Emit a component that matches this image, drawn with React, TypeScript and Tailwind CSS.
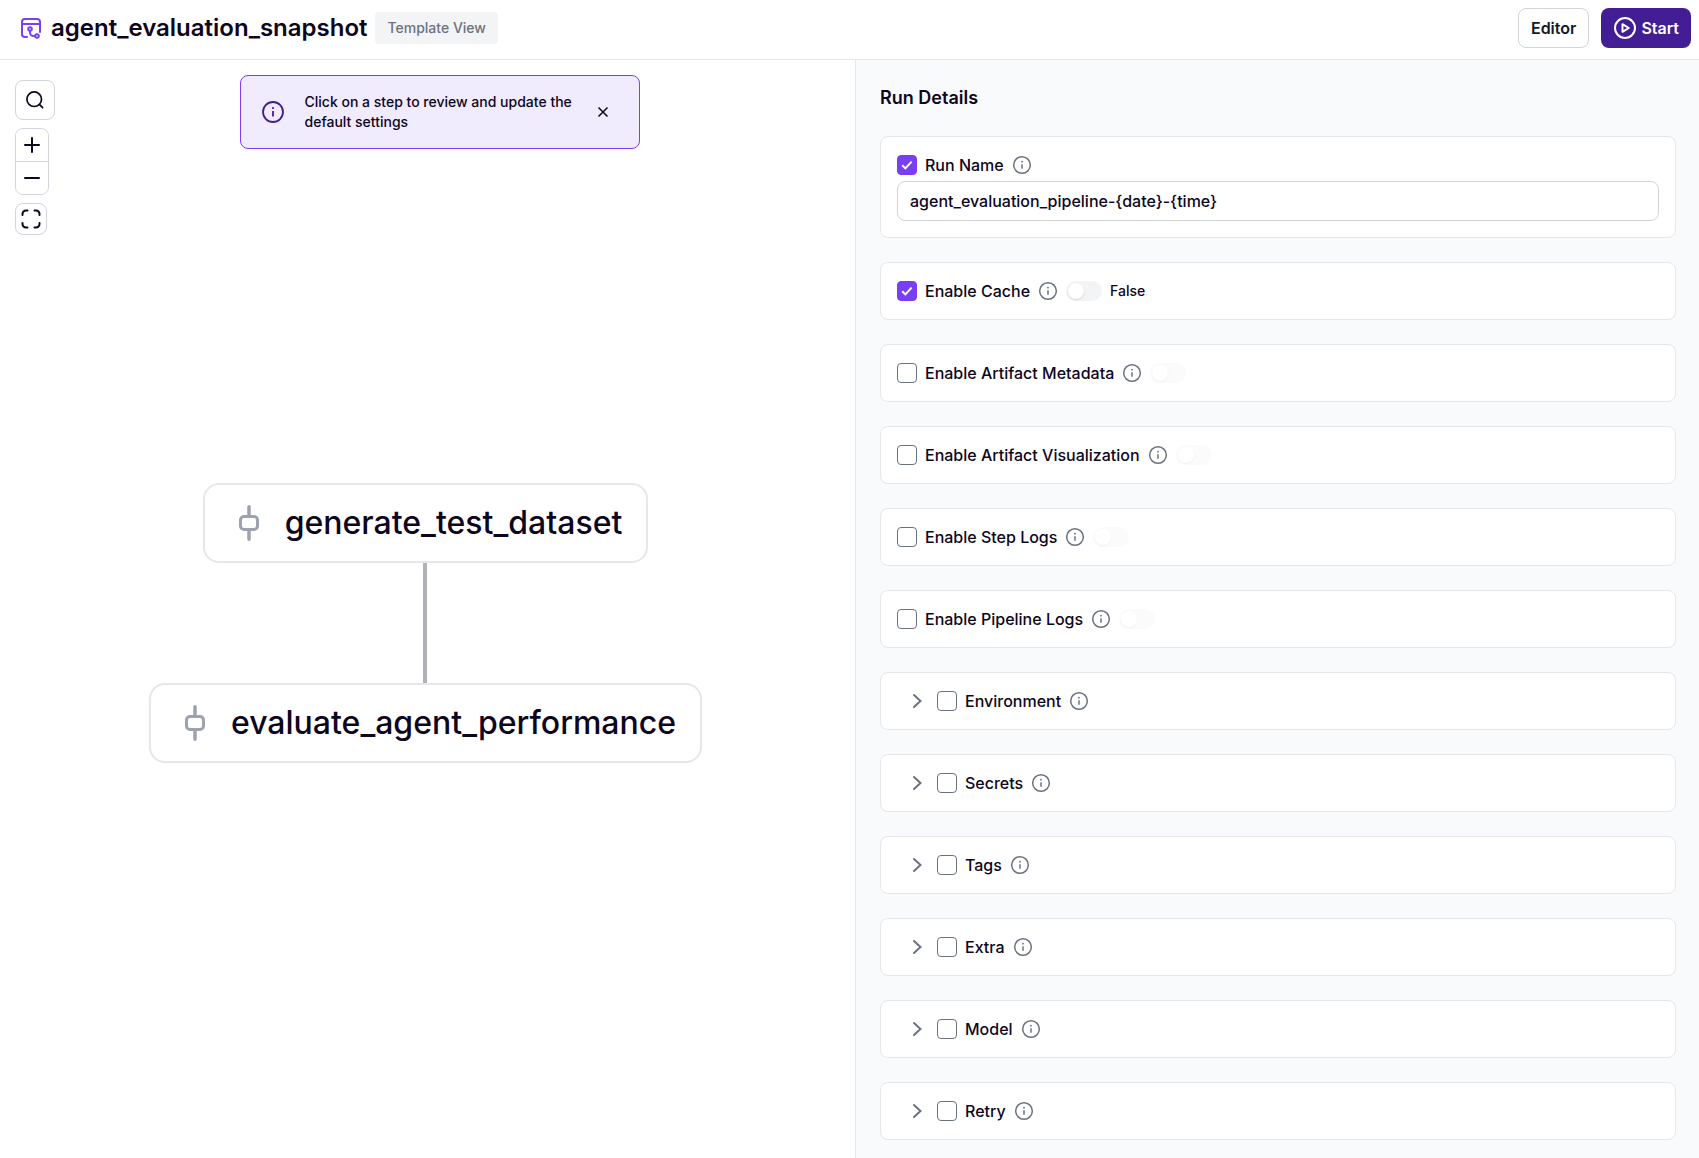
import { useState } from "react";

function InfoIcon({ className }: { className: string }) {
  return (
    <svg viewBox="0 0 24 24" fill="none" aria-hidden="true" className={className}>
      <circle cx="12" cy="12" r="10" stroke="currentColor" strokeWidth="1.8" />
      <path d="M12 11V16.500" stroke="currentColor" strokeWidth="1.8" />
      <circle cx="12" cy="8" r="1.1" fill="currentColor" />
    </svg>
  );
}

function SnapshotIcon() {
  return (
    <svg
      viewBox="0 0 24 24"
      fill="none"
      stroke="currentColor"
      strokeWidth="2"
      strokeLinecap="round"
      strokeLinejoin="round"
      aria-hidden="true"
      className="size-6 text-[#7a3ef4]"
    >
      <path d="M8 21H6a3 3 0 0 1-3-3V6a3 3 0 0 1 3-3h12a3 3 0 0 1 3 3v10" />
      <path d="M3 8h18" />
      <circle cx="11" cy="13" r="1.8" />
      <circle cx="18" cy="20" r="1.8" />
      <path d="M11 15v1.5a3.5 3.5 0 0 0 3.5 3.5H16" />
    </svg>
  );
}

function StepIcon() {
  return (
    <svg viewBox="0 0 40 40" fill="none" stroke="currentColor" strokeLinecap="round" aria-hidden="true" className="size-10 text-[#9ca3af]">
      <rect x="11.5" y="13.5" width="17" height="13" rx="3.5" strokeWidth="3" />
      <path d="M20 3.8V13M20 27v9.2" strokeWidth="3.5" />
    </svg>
  );
}

function Check({ id, defaultChecked = false }: { id: string; defaultChecked?: boolean }) {
  return (
    <span className="relative flex size-5 shrink-0">
      <input
        id={id}
        type="checkbox"
        defaultChecked={defaultChecked}
        className="peer size-5 appearance-none rounded border border-[#6b7280] bg-white checked:border-[#7a3ef4] checked:bg-[#7a3ef4]"
      />
      <svg
        viewBox="0 0 20 20"
        fill="none"
        stroke="white"
        strokeWidth="2"
        aria-hidden="true"
        className="pointer-events-none absolute inset-0 hidden size-5 peer-checked:block"
      >
        <path d="M5.2 10.2l3.2 3.2 6.2-6.8" />
      </svg>
    </span>
  );
}

function Field({ id, label, checked }: { id: string; label: string; checked?: boolean }) {
  return (
    <>
      <Check id={id} defaultChecked={checked} />
      <label htmlFor={id} className="text-base font-medium">
        {label}
      </label>
      <InfoIcon className="size-5 shrink-0 text-[#6b7280]" />
    </>
  );
}

function Toggle({ label, disabled }: { label: string; disabled?: boolean }) {
  return (
    <input
      type="checkbox"
      role="switch"
      aria-label={label}
      disabled={disabled}
      className="h-5 w-9 shrink-0 appearance-none rounded-full bg-[#f3f4f6] p-0.5 before:block before:size-4 before:rounded-full before:bg-white before:shadow-sm checked:bg-[#7a3ef4] checked:before:translate-x-4 disabled:opacity-30"
    />
  );
}

const card = "rounded-lg border border-[#e5e7eb] bg-white p-4";
const row = "flex h-6 items-center gap-2";

const switches = [
  { id: "cache", label: "Enable Cache", on: true },
  { id: "metadata", label: "Enable Artifact Metadata", on: false },
  { id: "visualization", label: "Enable Artifact Visualization", on: false },
  { id: "step-logs", label: "Enable Step Logs", on: false },
  { id: "pipeline-logs", label: "Enable Pipeline Logs", on: false },
];

const groups = ["Environment", "Secrets", "Tags", "Extra", "Model", "Retry"];

function StepNode({ name }: { name: string }) {
  return (
    <button type="button" className="flex h-20 items-center gap-4 rounded-2xl border-2 border-[#e5e7eb] bg-white px-6 text-[32px] leading-10 font-medium">
      <StepIcon />
      {name}
    </button>
  );
}

export default function App() {
  const [hint, setHint] = useState(true);
  const [runName, setRunName] = useState("agent_evaluation_pipeline-{date}-{time}");
  const tool = "flex items-center justify-center border-[#d1d5db] bg-white";

  return (
    <div className="flex min-h-screen flex-col bg-white font-['Inter',sans-serif] text-[#0d061d]">
      <header className="flex items-center justify-between border-b border-[#e5e7eb] pt-2 pr-2 pb-[11px] pl-[19px]">
        <div className="flex items-center gap-2">
          <SnapshotIcon />
          <h1 className="text-2xl font-semibold">agent_evaluation_snapshot</h1>
          <span className="rounded bg-[#f3f4f6] px-3 py-1.5 text-sm font-medium text-[#6b7280]">Template View</span>
        </div>
        <div className="flex gap-3">
          <button type="button" className="h-10 rounded-lg border border-[#d1d5db] bg-white px-3 font-semibold text-[#111827]">
            Editor
          </button>
          <button type="button" className="flex h-10 items-center gap-1 rounded-lg bg-[#431d93] px-3 font-semibold text-white">
            <svg viewBox="0 0 24 24" fill="none" stroke="currentColor" strokeWidth="2" strokeLinejoin="round" aria-hidden="true" className="size-6">
              <circle cx="12" cy="12" r="10" />
              <path d="M9.5 8.2v7.6l6.3-3.8z" />
            </svg>
            Start
          </button>
        </div>
      </header>

      <main className="grid flex-1 grid-cols-[855fr_844fr]">
        <section aria-label="Pipeline graph" className="relative flex items-center justify-center pt-7 pr-1">
          <div className="absolute top-5 left-[15px] flex flex-col items-start gap-2">
            <button type="button" aria-label="Search" className={`${tool} size-10 rounded-lg border`}>
              <svg viewBox="0 0 20 20" fill="none" stroke="currentColor" strokeWidth="1.7" strokeLinecap="round" aria-hidden="true" className="size-5">
                <circle cx="9.2" cy="9.2" r="7.3" />
                <path d="M14.6 14.6l3 3" />
              </svg>
            </button>
            <div className="flex w-[34px] flex-col overflow-hidden rounded-lg border border-[#d1d5db]">
              <button type="button" aria-label="Zoom in" className={`${tool} h-[33px] border-b`}>
                <svg viewBox="0 0 20 20" fill="none" stroke="currentColor" strokeWidth="2" strokeLinecap="round" aria-hidden="true" className="size-5">
                  <path d="M10 3v14M3 10h14" />
                </svg>
              </button>
              <button type="button" aria-label="Zoom out" className={`${tool} h-8`}>
                <svg viewBox="0 0 20 20" fill="none" stroke="currentColor" strokeWidth="2" strokeLinecap="round" aria-hidden="true" className="size-5">
                  <path d="M3 10h14" />
                </svg>
              </button>
            </div>
            <button type="button" aria-label="Fit view" className={`${tool} size-8 rounded-lg border`}>
              <svg viewBox="0 0 20 20" fill="none" stroke="currentColor" strokeWidth="2" strokeLinecap="round" aria-hidden="true" className="size-5">
                <path d="M1.5 6V5A3.5 3.5 0 0 1 5 1.500H6.500M13.500 1.500H15A3.500 3.500 0 0 1 18.500 5V6M18.500 14v1a3.500 3.500 0 0 1-3.500 3.500h-1.500M6.500 18.500H5A3.500 3.500 0 0 1 1.500 15v-1" />
              </svg>
            </button>
          </div>

          {hint && (
            <div className="absolute inset-x-0 top-[15px] flex justify-center pl-6">
              <div role="status" className="flex w-[400px] items-center gap-5 rounded-lg border border-[#7a3ef4] bg-[#f0ebfd] px-5 py-4">
                <InfoIcon className="size-6 shrink-0 text-[#431d93]" />
                <p className="flex-1 text-sm font-medium">Click on a step to review and update the default settings</p>
                <button type="button" aria-label="Dismiss" onClick={() => setHint(false)} className="mr-1.5 flex size-5 items-center justify-center">
                  <svg viewBox="0 0 20 20" fill="none" stroke="currentColor" strokeWidth="1.5" aria-hidden="true" className="size-5">
                    <path d="M5.500 5.500l9 9M14.500 5.500l-9 9" />
                  </svg>
                </button>
              </div>
            </div>
          )}

          <div className="flex flex-col items-center">
            <StepNode name="generate_test_dataset" />
            <div className="h-[120px] w-1 bg-[#b1b1b7]" />
            <StepNode name="evaluate_agent_performance" />
          </div>
        </section>

        <section className="flex flex-col gap-6 border-l border-[#e5e7eb] bg-[#f9fafc] pt-6 pr-[23px] pb-[18px] pl-6">
          <h2 className="text-lg leading-7 font-semibold">Run Details</h2>

          <div className={card}>
            <div className={row}>
              <Field id="run-name" label="Run Name" checked />
            </div>
            <input
              type="text"
              aria-label="Run name template"
              value={runName}
              onChange={(e) => setRunName(e.target.value)}
              className="mt-1 block h-10 w-full rounded-lg border border-[#d1d5db] bg-white px-3 text-base font-medium"
            />
          </div>

          {switches.map((s) => (
            <div key={s.id} className={card}>
              <div className={row}>
                <Field id={s.id} label={s.label} checked={s.on} />
                <Toggle label={`${s.label} value`} disabled={!s.on} />
                {s.on && <span className="text-sm font-medium">False</span>}
              </div>
            </div>
          ))}

          {groups.map((g) => (
            <div key={g} className={card}>
              <div className={`${row} pl-2`}>
                <button type="button" aria-label={`Expand ${g}`} className="size-6 text-[#6b7280]">
                  <svg viewBox="0 0 24 24" fill="none" stroke="currentColor" strokeWidth="2" strokeLinecap="round" aria-hidden="true" className="size-6">
                    <path d="M9 6l6.500 6-6.500 6" />
                  </svg>
                </button>
                <Field id={g.toLowerCase()} label={g} />
              </div>
            </div>
          ))}
        </section>
      </main>
    </div>
  );
}
